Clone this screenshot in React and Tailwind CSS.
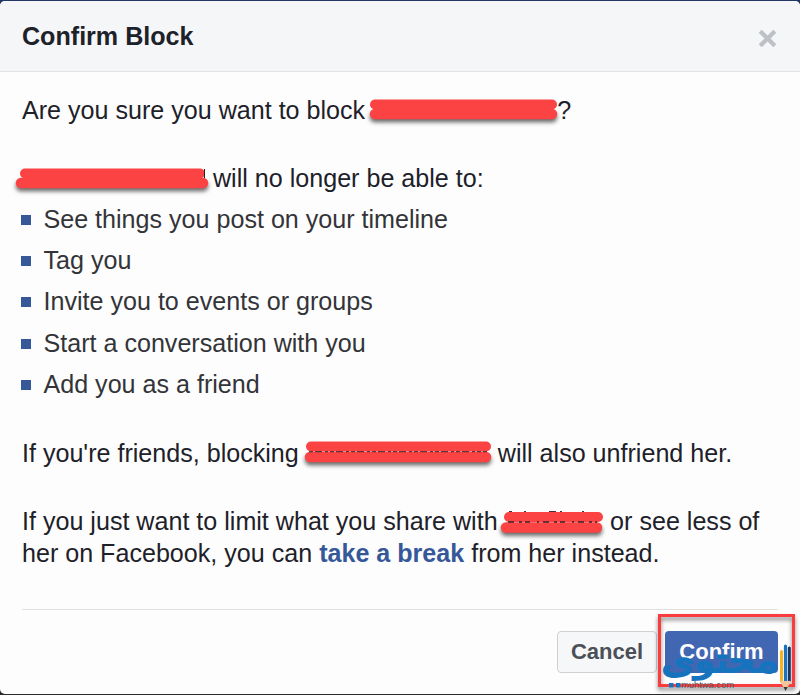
const bullets = [
  'See things you post on your timeline',
  'Tag you',
  'Invite you to events or groups',
  'Start a conversation with you',
  'Add you as a friend',
];

// Marker scribble made of two overlapping strokes with a soft shadow underneath.
function Scribble({ width, top, bottom, children, className }) {
  return (
    <svg
      width={width}
      height="33"
      viewBox={`0 0 ${width} 33`}
      className={`inline-block shrink-0 overflow-visible ${className || ''}`}
    >
      <g className="[filter:drop-shadow(0px_3px_2px_rgba(0,0,0,0.6))]">
        <path d={bottom} stroke="#fb4343" strokeWidth="10.5" strokeLinecap="round" fill="none" />
      </g>
      <path d={top} stroke="#fb4343" strokeWidth="10" strokeLinecap="round" fill="none" />
      {children}
    </svg>
  );
}

function Watermark() {
  return (
    <svg width="136" height="50" viewBox="660 643 136 50" className="absolute left-[660px] top-[643px] overflow-visible">
      <text
        x="720"
        y="672"
        textAnchor="middle"
        textLength="117"
        lengthAdjust="spacingAndGlyphs"
        direction="rtl"
        fill="#1673be"
        stroke="#1673be"
        strokeWidth="2"
        className="font-['DejaVu_Sans',sans-serif] text-[34px]"
      >
        محتوى
      </text>
      <rect x="669" y="683" width="4.500" height="4.500" fill="#1673be" />
      <rect x="676" y="683" width="4.500" height="4.500" fill="#1673be" />
      <text
        x="681"
        y="688"
        textLength="53"
        lengthAdjust="spacingAndGlyphs"
        fill="#555a60"
        className="font-['Liberation_Sans',sans-serif] text-[9px]"
      >
        muhtwa.com
      </text>
      <path d="M781.5 651.5V681" stroke="#f7b21d" strokeWidth="3" strokeLinecap="round" />
      <path d="M785.5 646V681" stroke="#1673be" strokeWidth="3.2" strokeLinecap="round" />
      <path d="M789.3 648V681" stroke="#20335f" strokeWidth="3" strokeLinecap="round" />
      <path d="M780 681.500q2-1.500 3.500 0q2-1.500 4 0q1.500-1.500 3.500 0L785.500 690.500Z" fill="#f3c59b" />
      <path d="M783.500 687h4.200L785.600 691Z" fill="#333" />
    </svg>
  );
}

export default function App() {
  return (
    <div className="relative flex h-[695px] w-[800px] flex-col overflow-hidden bg-[#243764] pt-px font-['Liberation_Sans',Arial,sans-serif] text-[25.1px] leading-[33px] text-[#1d2129]">
      <div className="absolute bottom-0 left-0 h-3 w-full bg-[#2b292c]" />
      <div className="relative flex h-[693px] flex-col overflow-hidden rounded-[5px] bg-[#fdfdfd]">
        <header className="flex h-[71px] shrink-0 items-center justify-between border-b border-[#e3e4e6] bg-[#f5f6f7] pl-[22px] pr-[23px]">
          <h1 className="font-bold">Confirm Block</h1>
          <svg width="19" height="19" viewBox="0 0 19 19" className="mt-[4px]">
            <path d="M2.200 2.200L16.800 16.800M16.800 2.200L2.200 16.800" stroke="#bdc0c7" strokeWidth="4.200" />
          </svg>
        </header>

        <main className="flex flex-col whitespace-nowrap px-[22px] pt-[22px]">
          <p className="flex h-[33px]">
            Are you sure you want to block
            <Scribble width={192} top="M10 10.500H187" bottom="M10 20H187" />?
          </p>

          <p className="mt-[35px] flex h-[33px]">
            <Scribble width={191} top="M3 11.500H178" bottom="M-1 21H181">
              <path d="M182.500 7v9" stroke="#1d2129" strokeWidth="1" />
            </Scribble>
            will no longer be able to:
          </p>

          <ul className="mt-1 text-[#333438]">
            {bullets.map((item) => (
              <li key={item} className="flex h-[41.2px] items-center gap-[12.5px]">
                <span className="mt-px ml-[-1px] size-[10px] bg-[#365899]" />
                {item}
              </li>
            ))}
          </ul>

          <p className="mt-[32px] flex h-[33px]">
            If you're friends, blocking
            <Scribble width={199} top="M12 9.500H187" bottom="M11 20H187">
              <path d="M10 14.700H188" stroke="#38242b" strokeWidth="1" strokeDasharray="4 2 7 3 3 2" />
            </Scribble>
            will also unfriend her.
          </p>

          <p className="mt-[35px] flex h-[33px]">
            If you just want to limit what you share with
            <Scribble width={112.5} top="M11 12H100" bottom="M8 22.500H99">
              <path d="M10 17H99" stroke="#38242b" strokeWidth="1.500" strokeDasharray="6 5 3 3 5 7 2 4" />
              <path d="M11 6.500h3M26 6.500h2M51 6.500h7M62 6.500h2M84 6.500h2" stroke="#4c3035" />
            </Scribble>
            or see less of
          </p>
          <p className="-mt-px h-[33px]">
            her on Facebook, you can <a className="font-bold text-[#365899]">take a break</a> from her instead.
          </p>
        </main>

        <footer className="mx-[22px] mt-[39px] flex justify-end gap-[8px] border-t border-[#dfe0e2] pt-[21px] text-[22px] font-bold">
          <button className="h-[42px] w-[100px] rounded-[4px] border border-[#ced0d4] bg-[#f6f7f9] text-[#4b4f56]">Cancel</button>
          <button className="h-[42px] w-[113px] rounded-[4px] bg-[#4267b2] text-white">Confirm</button>
        </footer>
      </div>

      <div className="absolute left-[658px] top-[614px] h-[73px] w-[137px] border-[3px] border-[#fb3c3f] [filter:drop-shadow(0px_3px_2px_rgba(0,0,0,0.5))]" />
      <Watermark />
    </div>
  );
}
